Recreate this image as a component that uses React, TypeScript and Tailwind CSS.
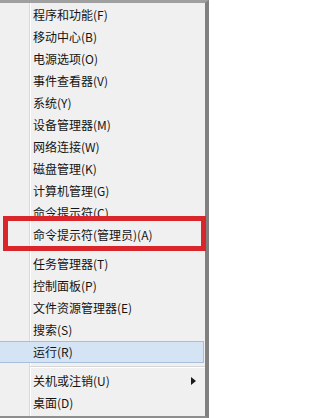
import React from "react";

type Entry = { label: string; sep?: boolean; active?: boolean; sub?: boolean };

const entries: Entry[] = [
    { label: "程序和功能(F)" },
    { label: "移动中心(B)" },
    { label: "电源选项(O)" },
    { label: "事件查看器(V)" },
    { label: "系统(Y)" },
    { label: "设备管理器(M)" },
    { label: "网络连接(W)" },
    { label: "磁盘管理(K)" },
    { label: "计算机管理(G)" },
    { label: "命令提示符(C)" },
    { label: "命令提示符(管理员)(A)" },
    { label: "", sep: true },
    { label: "任务管理器(T)" },
    { label: "控制面板(P)" },
    { label: "文件资源管理器(E)" },
    { label: "搜索(S)" },
    { label: "运行(R)", active: true },
    { label: "", sep: true },
    { label: "关机或注销(U)", sub: true },
    { label: "桌面(D)" },
];

function MenuRow({ item }: { item: Entry }) {
    if (item.sep) {
        return (
            <div className="h-[7px] flex items-center pl-[30px]">
                <div className="w-full h-[2px] border-t border-[#d7d7d7] border-b border-b-white" />
            </div>
        );
    }
    return (
        <div
            className={`h-[22px] flex items-center pl-[33px] pr-[8px] mr-[1px] ${
                item.active ? "bg-[#d5e4f5] border border-l-0 border-[#a7bedc] pl-[33px]" : ""
            }`}
        >
            <span className="flex-1 text-[12px] leading-[22px] text-[#141414] whitespace-nowrap">{item.label}</span>
            {item.sub && (
                <svg width="5" height="8" viewBox="0 0 5 8">
                    <polygon points="0,0 5,4 0,8" fill="#1a1a1a" />
                </svg>
            )}
        </div>
    );
}

export default function App() {
    return (
        <div
            className="relative w-[209px] h-[418px] bg-[#f0f0f0] border-t-[3px] border-t-[#9f9f9f] border-r-[4px] border-r-[#808080] border-b-[2px] border-b-[#8e8e8e] pt-[1px] bg-[linear-gradient(to_right,transparent_29px,#dadada_29px,#dadada_30px,#ffffff_30px,#ffffff_31px,transparent_31px)]"
            style={{ fontFamily: '"Noto Sans CJK SC", "Noto Sans", sans-serif' }}
        >
            {entries.map((e, i) => (
                <MenuRow key={i} item={e} />
            ))}
            <div className="absolute left-[3px] top-[213px] w-[203px] h-[35px] border-[5px] border-[#d8262b]" />
        </div>
    );
}
